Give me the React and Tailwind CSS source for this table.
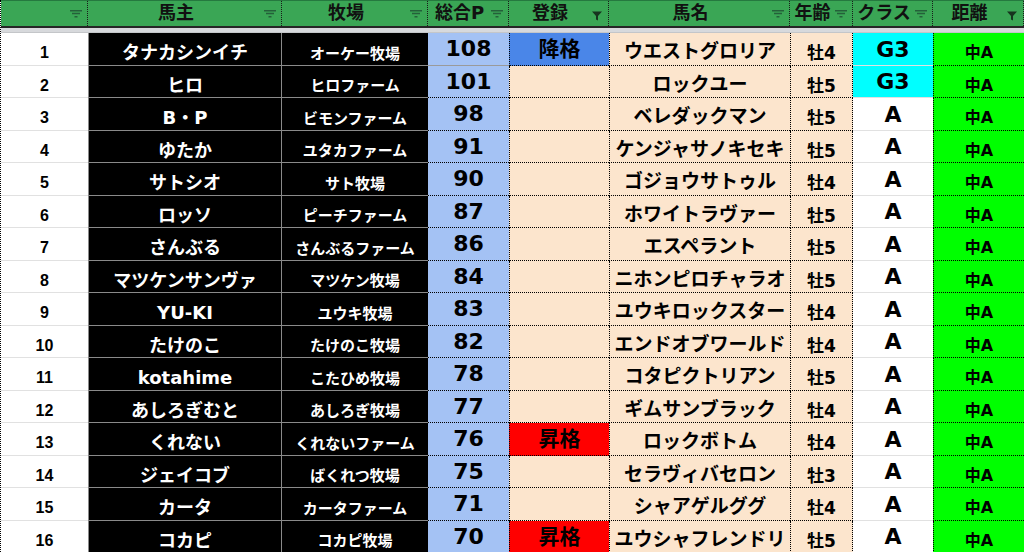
import React from 'react';

// column widths match the sheet
const COLS = 'grid grid-cols-[87px_194px_146px_81px_100px_181px_63px_80px_91px]';
const DEJA = "font-['DejaVu_Sans','Noto_Sans_CJK_JP',sans-serif]";
const LIB = "font-['Liberation_Sans','Noto_Sans_CJK_JP',sans-serif]";

const headers = [
  { label: '', active: false },
  { label: '馬主', active: false },
  { label: '牧場', active: false },
  { label: '総合P', active: false },
  { label: '登録', active: true },
  { label: '馬名', active: false },
  { label: '年齢', active: false },
  { label: 'クラス', active: false },
  { label: '距離', active: true },
];

const rows = [
  [1, 'タナカシンイチ', 'オーケー牧場', 108, '降格', 'ウエストグロリア', '牡4', 'G3'],
  [2, 'ヒロ', 'ヒロファーム', 101, '', 'ロックユー', '牡5', 'G3'],
  [3, 'B・P', 'ビモンファーム', 98, '', 'ベレダックマン', '牡5', 'A'],
  [4, 'ゆたか', 'ユタカファーム', 91, '', 'ケンジャサノキセキ', '牡5', 'A'],
  [5, 'サトシオ', 'サト牧場', 90, '', 'ゴジョウサトゥル', '牡4', 'A'],
  [6, 'ロッソ', 'ピーチファーム', 87, '', 'ホワイトラヴァー', '牡5', 'A'],
  [7, 'さんぶる', 'さんぶるファーム', 86, '', 'エスペラント', '牡5', 'A'],
  [8, 'マツケンサンヴァ', 'マツケン牧場', 84, '', 'ニホンピロチャラオ', '牡5', 'A'],
  [9, 'YU-KI', 'ユウキ牧場', 83, '', 'ユウキロックスター', '牡4', 'A'],
  [10, 'たけのこ', 'たけのこ牧場', 82, '', 'エンドオブワールド', '牡4', 'A'],
  [11, 'kotahime', 'こたひめ牧場', 78, '', 'コタピクトリアン', '牡5', 'A'],
  [12, 'あしろぎむと', 'あしろぎ牧場', 77, '', 'ギムサンブラック', '牡4', 'A'],
  [13, 'くれない', 'くれないファーム', 76, '昇格', 'ロックボトム', '牡4', 'A'],
  [14, 'ジェイコブ', 'ばくれつ牧場', 75, '', 'セラヴィバセロン', '牡3', 'A'],
  [15, 'カータ', 'カータファーム', 71, '', 'シャアゲルググ', '牡4', 'A'],
  [16, 'コカピ', 'コカピ牧場', 70, '昇格', 'ユウシャフレンドリ', '牡5', 'A'],
];

const SortIcon = () => (
  <svg width="12" height="8" viewBox="0 0 12 8" className="shrink-0">
    <path d="M0 0.75H12M2 3.5H10M4.5 6.75H7.5" stroke="#24603a" strokeWidth="1.3" />
  </svg>
);

const FunnelIcon = () => (
  <svg width="10" height="10" viewBox="0 0 10 10" className="shrink-0 mt-[4px]">
    <path d="M0 0.5H10L6 5V9.5L4 8.5V5Z" fill="#17351f" />
  </svg>
);

const regClass = (reg) => {
  if (reg === '降格') return 'bg-[#4a86e8]';
  if (reg === '昇格') return 'bg-[#ff0000]';
  return 'bg-[#fce5cd]';
};

export default function App() {
  return (
    <div className="w-[1024px] h-[552px] overflow-hidden bg-white border-l border-dotted border-black">
      {/* Header */}
      <div className={`${COLS} bg-[#3aa655] border-t border-t-[#25793f] border-b-2 border-b-[#262626]`}>
        {headers.map((h, i) => (
          <div key={i} className="h-[25px] flex items-center border-r border-dotted border-[#1a1a1a]">
            <span className={`flex-1 text-center text-[18px] font-bold text-[#111] leading-none pb-[1px] ${DEJA}`}>
              {h.label}
            </span>
            <span className="w-[12px] mr-[5px] flex justify-center">
              {h.active ? <FunnelIcon /> : <SortIcon />}
            </span>
          </div>
        ))}
      </div>
      <div className="h-[5px] bg-[#d7d9dc] border-b border-b-[#c4c6c9]" />

      {/* Body */}
      {rows.map((r, idx) => {
        const [no, owner, farm, pts, reg, horse, age, cls] = r;
        return (
          <div key={no} className={`${COLS} leading-none ${idx % 2 === 0 ? 'h-[33px]' : 'h-[32px]'}`}>
            <div className={`flex items-center justify-center pt-[8px] bg-white border-b border-b-[#e1e1e1] text-[16px] font-bold text-black ${LIB}`}>
              {no}
            </div>
            <div className={`flex items-center justify-center pt-[8px] bg-black border-l border-r border-b border-[#8a8a8a] text-white text-[18px] font-bold ${DEJA}`}>
              {owner}
            </div>
            <div className={`flex items-center justify-center pt-[10px] bg-black border-b border-[#8a8a8a] text-white text-[15px] font-bold ${DEJA}`}>
              {farm}
            </div>
            <div className={`flex items-center justify-center bg-[#a4c2f4] border-b ${idx === 0 ? 'border-solid border-[#9a9a9a]' : 'border-dotted border-black'} text-black text-[22px] font-bold ${DEJA}`}>
              {pts}
            </div>
            <div className={`flex items-center justify-center pt-[1px] ${regClass(reg)} border-l border-b border-dotted border-black text-black text-[21px] font-bold ${DEJA}`}>
              {reg}
            </div>
            <div className={`flex items-center justify-center pt-[5px] bg-[#fce5cd] border-l border-b border-dotted border-black text-black text-[19px] font-bold whitespace-nowrap ${DEJA}`}>
              {horse}
            </div>
            <div className={`flex items-center justify-center pt-[9px] bg-[#fce5cd] border-l border-r border-b border-dotted border-black text-black text-[17px] font-bold ${DEJA}`}>
              {age}
            </div>
            <div className={`flex items-center justify-center pt-[1px] ${cls === 'G3' ? 'bg-[#00ffff]' : 'bg-white'} border-b border-b-[#e1e1e1] text-black text-[22px] font-bold ${DEJA}`}>
              {cls}
            </div>
            <div className={`flex items-center justify-center pt-[8px] bg-[#00ff00] border-l border-b border-dotted border-black text-black text-[16px] font-bold ${DEJA}`}>
              中A
            </div>
          </div>
        );
      })}
    </div>
  );
}
